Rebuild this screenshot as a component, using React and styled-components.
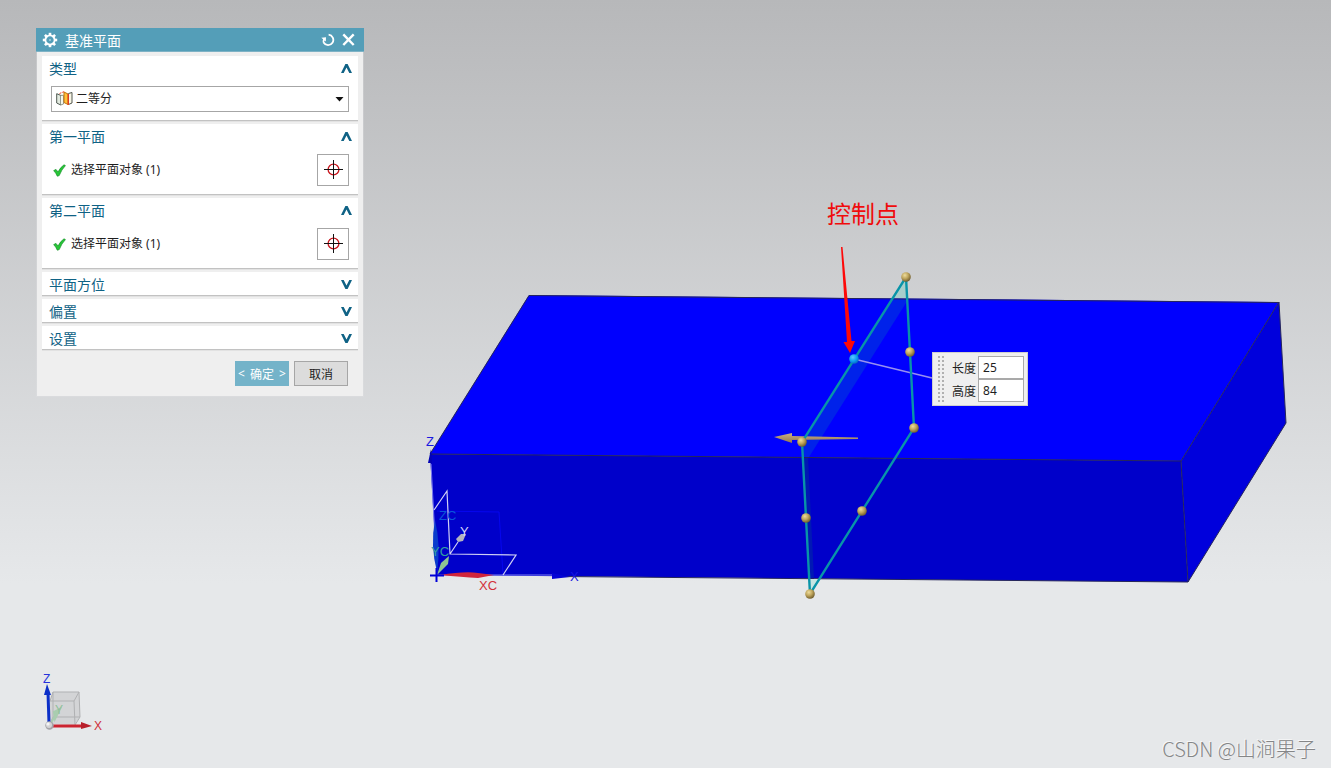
import React, { useState } from "react";
import styled, { createGlobalStyle, css } from "styled-components";

const UI_FONT = `"Noto Sans", "Noto Sans CJK SC", sans-serif`;

const GlobalStyle = createGlobalStyle`
  *, *::before, *::after { box-sizing: border-box; }
  body { margin: 0; font-family: ${UI_FONT}; font-size: 12px; color: #1e1e1e; }
  button, input, select { font: inherit; color: inherit; margin: 0; }
`;

const Viewport = styled.main`
  position: relative;
  min-height: 100vh;
  overflow: hidden;
  background: linear-gradient(#b7b8ba 0%, #e6e8ea 76%, #e6e8ea 100%);
`;

const Scene = styled.svg`
  position: absolute;
  inset: 0;
  width: 100%;
  height: 100%;
  font-family: "Liberation Sans", sans-serif;
`;

const Triad = styled.svg`
  position: absolute;
  left: 40px;
  bottom: 30px;
  width: 70px;
  height: 70px;
  font-family: "Liberation Sans", sans-serif;
`;

const Dialog = styled.section`
  position: absolute;
  left: 36px;
  top: 28px;
  width: 328px;
`;

const TitleBar = styled.header`
  display: flex;
  align-items: center;
  height: 24px;
  padding: 0 9px 0 6px;
  gap: 7px;
  background: #549eb8;
  color: #fff;
`;

const Title = styled.h1`
  flex: 1;
  margin: 0;
  padding-top: 2px;
  font-size: 14px;
  line-height: 24px;
  font-weight: 400;
`;

const TitleButton = styled.button`
  display: flex;
  padding: 0;
  border: 0;
  background: none;
`;

const DialogBody = styled.form`
  display: flex;
  flex-direction: column;
  gap: 3px;
  margin: 0 1px;
  padding: 4px 5px 10px;
  background: #efefef;
  box-shadow: 0 0 0 1px rgba(225, 226, 228, 0.3);
`;

const Group = styled.section`
  background: #fff;
  border-bottom: 1px solid #c2c2c2;
  box-shadow: 0 1px 0 #e2e2e2;
`;

const GroupHeading = styled.h2`
  margin: 0;
  font-size: 14px;
  font-weight: 400;
`;

const GroupToggle = styled.button`
  display: flex;
  align-items: center;
  justify-content: space-between;
  width: 100%;
  height: 23px;
  padding: 2px 6px 0 7px;
  border: 0;
  background: none;
  color: #0f6285;
  line-height: 22px;
  text-align: left;
`;

const GroupContent = styled.div`
  padding: 7px 9px 8px;
`;

const SelectBox = styled.label`
  position: relative;
  display: block;

  svg { position: absolute; pointer-events: none; }
  svg:first-child { left: 5px; top: 5px; }
  svg:last-child { right: 5px; top: 11px; }
`;

const TypeSelect = styled.select`
  display: block;
  width: 100%;
  height: 26px;
  padding: 0 24px 1px;
  border: 1px solid #a6a6a6;
  border-radius: 0;
  background: #fff;
  appearance: none;
`;

const PickRow = styled.div`
  display: flex;
  align-items: center;
  gap: 5px;
  padding-left: 2px;
`;

const PickLabel = styled.span`
  flex: 1;
  padding-bottom: 2px;
`;

const PickButton = styled.button`
  display: flex;
  align-items: center;
  justify-content: center;
  width: 32px;
  height: 32px;
  padding: 0;
  border: 1px solid #a6a6a6;
  background: #fff;
`;

const Actions = styled.footer`
  display: flex;
  justify-content: flex-end;
  gap: 5px;
  padding: 8px 10px 0 0;
`;

const ActionButton = styled.button`
  display: flex;
  align-items: center;
  justify-content: center;
  gap: 5px;
  width: 54px;
  height: 25px;
  padding: 0;
  border: 1px solid #a6a6a6;
  background: #dcdcdc;
  ${({ $primary }) => $primary && css`
    border-color: #74b3c9;
    background: #74b3c9;
    color: #fff;
  `}
`;

const Note = styled.p`
  position: absolute;
  left: 827px;
  top: 200px;
  margin: 0;
  font-size: 24px;
  line-height: 28px;
  color: #f00c0c;
`;

const SizePanel = styled.div`
  position: absolute;
  left: 932px;
  top: 352px;
  display: flex;
  padding: 3px;
  border: 1px solid #cfcfcf;
  background: #efefef;
`;

const Grip = styled.div`
  width: 8px;
  height: 46px;
  margin-right: 8px;
  background: conic-gradient(#b0b0b0 90deg, transparent 0) 0 0 / 4px 4px;
`;

const SizeFields = styled.div`
  display: flex;
  flex-direction: column;
`;

const SizeField = styled.label`
  display: flex;
  align-items: center;
  gap: 2px;
`;

const SizeInput = styled.input`
  width: 46px;
  height: 23px;
  padding: 0 4px;
  border: 1px solid #a9a9a9;
  border-radius: 0;
  background: #fff;
`;

const Watermark = styled.p`
  position: absolute;
  right: 15px;
  bottom: 6px;
  margin: 0;
  font-family: "Noto Sans CJK SC", sans-serif;
  font-size: 20px;
  line-height: 26px;
  font-weight: 300;
  color: #858687;
  text-shadow: -1px -1px 0 #f6f7f8;
`;

const TEETH = [0, 45, 90, 135, 180, 225, 270, 315];

function GearIcon() {
  return (
    <svg width="16" height="16" viewBox="-8 -8 16 16" aria-hidden="true">
      {TEETH.map((a) => (
        <rect key={a} x="-1.3" y="-7.2" width="2.6" height="3" fill="#fff" transform={`rotate(${a})`} />
      ))}
      <circle r="4.6" fill="none" stroke="#fff" strokeWidth="1.8" />
      <circle r="1" fill="#a9d0de" />
    </svg>
  );
}

function ResetIcon() {
  return (
    <svg width="14" height="14" viewBox="0 0 14 14" aria-hidden="true">
      <path d="M7.6 1.7a5.2 5.2 0 1 1-5 7.8" fill="none" stroke="#fff" strokeWidth="1.8" />
      <path d="M0.3 4.7 5 4.2 4.8 8.6 3.6 7.6Q3 8.6 3.4 9.9L1.8 9.8Q1.3 8 2.1 6.3Z" fill="#fff" />
    </svg>
  );
}

function CloseIcon() {
  return (
    <svg width="13" height="14" viewBox="0 0 13 14" aria-hidden="true">
      <path d="M1.3 1.4 11.7 12M11.7 1.4 1.3 12" stroke="#fff" strokeWidth="2.4" />
    </svg>
  );
}

function Chevron({ open }) {
  return (
    <svg width="11" height="9" viewBox="0 0 11 9" aria-hidden="true">
      <path
        d={open ? "M0 9 4.4 0H6.6L11 9H8.3L5.5 3.600 2.700 9Z" : "M0 0 4.4 9H6.6L11 0H8.3L5.5 5.4 2.7 0Z"}
        fill="#0f6285"
      />
    </svg>
  );
}

function BisectorIcon() {
  return (
    <svg width="17" height="16" viewBox="0 0 17 16" aria-hidden="true">
      <path d="M4.8 2.500H8V11H4.800Z" fill="#f5f8ee" />
      <path d="M.7 2.7 4.8 4.4V14L.7 12Z" fill="#e2eadf" stroke="#4e5850" />
      <path d="M4.8 4.4H7.500V13L4.800 14" fill="#f5f8ee" stroke="#7c8474" strokeWidth=".8" />
      <path d="M3.500 2.500 8 .7" stroke="#ed3b20" strokeDasharray="2 1" />
      <path d="M8 1 12 3V13.500L8 11.500Z" fill="#ffc23a" stroke="#c4700c" />
      <path d="M12.500 2.500 16 1.500V12L12.500 13.500Z" fill="#f8f6e6" stroke="#545950" />
      <path d="M12.300 3V14" stroke="#ed3b20" strokeWidth="1.2" />
    </svg>
  );
}

function CheckIcon() {
  return (
    <svg width="13" height="13" viewBox="0 0 13 13" aria-hidden="true">
      <path d="M.7 6.6 3 5.4 5 8Q7.6 3 11 .8L12.4 1.6Q8.5 5.6 6.2 11.6L4.3 12.2Q3 9 .7 6.6Z" fill="#27c637" stroke="#149126" strokeWidth=".7" />
    </svg>
  );
}

function TargetIcon() {
  return (
    <svg width="20" height="20" viewBox="0 0 20 20" aria-hidden="true">
      <circle cx="10.5" cy="9.5" r="5.4" fill="none" stroke="#c8171e" strokeWidth="1.3" />
      <path d="M1 9.5H20M10.5 0V19" stroke="#111" />
    </svg>
  );
}

function PlaneGroup({ title, open, onToggle, children }) {
  return (
    <Group>
      <GroupHeading>
        <GroupToggle type="button" aria-expanded={open} onClick={onToggle}>
          {title}
          <Chevron open={open} />
        </GroupToggle>
      </GroupHeading>
      {open && children && <GroupContent>{children}</GroupContent>}
    </Group>
  );
}

function ObjectPicker() {
  return (
    <PickRow>
      <CheckIcon />
      <PickLabel>选择平面对象 (1)</PickLabel>
      <PickButton type="button" aria-label="选择平面对象">
        <TargetIcon />
      </PickButton>
    </PickRow>
  );
}

const HANDLES = [
  [906, 277], [910, 352], [914, 428], [862, 511],
  [810, 594], [806, 518], [802, 442],
];

function ModelScene() {
  return (
    <Scene aria-label="基准平面">
      <defs>
        <radialGradient id="brass" cx=".38" cy=".32" r=".7">
          <stop offset="0" stopColor="#eddc9c" />
          <stop offset=".5" stopColor="#bfa55c" />
          <stop offset="1" stopColor="#6e5b2c" />
        </radialGradient>
        <radialGradient id="azure" cx=".38" cy=".32" r=".7">
          <stop offset="0" stopColor="#5cc8ff" />
          <stop offset=".6" stopColor="#0c9cf0" />
          <stop offset="1" stopColor="#0668c4" />
        </radialGradient>
        <linearGradient id="bronze" x1="0" y1="0" x2="0" y2="1">
          <stop offset="0" stopColor="#cbb086" />
          <stop offset="1" stopColor="#92764e" />
        </linearGradient>
      </defs>

      <polygon points="529,295 1279,302 1181,461 430,454" fill="#0000fe" />
      <polygon points="430,454 1181,461 1188,582 437,575" fill="#0000ca" />
      <polygon points="1181,461 1279,302 1286,423 1188,582" fill="#0000dc" />
      <polygon points="892,299 906,299 906,303 809,457 803,457 802,442" fill="#0022ea" />
      <polygon points="803,457 808,457 814,579 810,579" fill="#0018b4" />
      <g fill="none" stroke="#26265a">
        <path d="M430 454 529 295.5 1279 302.5" />
        <path d="M430 454 1181 461 1279 302" />
        <path d="M1181 461 1188 582 1286 423 1279 302" />
        <path d="M560 576.5 1188 582" />
      </g>
      <polygon points="906,277 892,298 907,298" fill="#a8cfcb" />
      <polygon points="810,594 809,579 820,579" fill="#c6e4e1" />

      <g fill="none">
        <path d="M437 511 499 512 503 574" stroke="#0606f0" />
        <path d="M431 464 437 575H552" stroke="#7c7cf0" />
        <path d="M434 510 447 491 450 554 516 555 503 575M450 554 458 542" stroke="#d0d0f4" strokeWidth="1.2" />
      </g>
      <polygon points="431,449 428,463 432,463" fill="#0202b4" />
      <path d="M435 520Q430 545 437 572 441 545 435 520Z" fill="#0a3ccc" />
      <polygon points="456,539 461,534 466,534 463,541 458,542" fill="#b4b4c0" />
      <path d="M437 575 441 563 449 556 448 564Z" fill="#8fc493" />
      <path d="M440 575Q465 571 478 573L494 575 478 578Q462 577 440 575Z" fill="#d0253c" />
      <polygon points="552,573 570,577 552,579" fill="#0404d6" />
      <path d="M430 575.5H444M436.5 568V582" stroke="#0000d8" strokeWidth="2" />
      <g fontSize="13">
        <text x="426" y="446" fill="#1a1ae0">Z</text>
        <text x="439" y="520" fill="#0a56dc">ZC</text>
        <text x="431" y="556" fill="#31a09c">YC</text>
        <text x="460" y="536" fill="#d4d4fa">Y</text>
        <text x="479" y="590" fill="#d2303a">XC</text>
        <text x="570" y="581" fill="#1616e0">X</text>
      </g>

      <path d="M854 359 932 378" stroke="#9890f0" strokeWidth="1.4" />
      <path d="M774 437 792 433V436L858 437.5V439L792 440V443Z" fill="url(#bronze)" />
      <polygon points="906,277 914,428 810,594 802,442" fill="none" stroke="#0894a8" strokeWidth="2.4" />
      {HANDLES.map(([x, y]) => (
        <circle key={`${x}-${y}`} cx={x} cy={y} r="4.8" fill="url(#brass)" />
      ))}
      <circle cx="854" cy="359" r="4.8" fill="url(#azure)" />
      <path d="M841 247H842.5L851.5 341H855L850 353 843.5 342H847Z" fill="#fe0808" />
    </Scene>
  );
}

function AxisTriad() {
  return (
    <Triad viewBox="40 668 70 70" aria-hidden="true">
      <polygon points="53,692 79,692 80,717 74,725 50,724 50,701" fill="#d3d4d6" />
      <path
        d="M50 701 53 692H79L80 717 75 725M50 701H74L75 725M74 701 79 692M53 692V717H80M53 717 50 724"
        fill="none"
        stroke="#b0b1b3"
      />
      <path d="M51 723 56 714M54 712 60 709 55 719Z" stroke="#a9cdb0" fill="#a9cdb0" strokeWidth="2" />
      <path d="M49 723 48 693" stroke="#0b2fc8" strokeWidth="3" />
      <polygon points="47,684 44,695 51,695" fill="#0b2fc8" />
      <path d="M51 726H83" stroke="#cc2430" strokeWidth="3" />
      <polygon points="92,726 81,722 81,729" fill="#b81f2b" />
      <circle cx="49.5" cy="725.5" r="4.2" fill="#a4a4a8" />
      <circle cx="49" cy="725" r="3" fill="#d4d4d6" />
      <circle cx="48" cy="724" r="1.6" fill="#f4f4f4" />
      <text x="43" y="683" fontSize="12" fill="#2632dc">Z</text>
      <text x="55" y="714" fontSize="12" fill="#8fc09a">Y</text>
      <text x="94" y="730" fontSize="12" fill="#d0303a">X</text>
    </Triad>
  );
}

export default function App() {
  const [open, setOpen] = useState({ type: true, first: true, second: true });
  const bind = (key) => ({
    open: Boolean(open[key]),
    onToggle: () => setOpen((prev) => ({ ...prev, [key]: !prev[key] })),
  });

  return (
    <>
      <GlobalStyle />
      <Viewport>
        <ModelScene />
        <AxisTriad />

        <Note>控制点</Note>

        <SizePanel>
          <Grip />
          <SizeFields>
            <SizeField>
              长度
              <SizeInput defaultValue="25" />
            </SizeField>
            <SizeField>
              高度
              <SizeInput defaultValue="84" />
            </SizeField>
          </SizeFields>
        </SizePanel>

        <Dialog>
          <TitleBar>
            <GearIcon />
            <Title>基准平面</Title>
            <TitleButton type="button" aria-label="重置"><ResetIcon /></TitleButton>
            <TitleButton type="button" aria-label="关闭"><CloseIcon /></TitleButton>
          </TitleBar>
          <DialogBody onSubmit={(e) => e.preventDefault()}>
            <PlaneGroup title="类型" {...bind("type")}>
              <SelectBox>
                <BisectorIcon />
                <TypeSelect aria-label="类型">
                  <option>二等分</option>
                </TypeSelect>
                <svg width="9" height="5" viewBox="0 0 9 5" aria-hidden="true">
                  <path d="M.5 0H8.5L4.5 4.5Z" fill="#111" />
                </svg>
              </SelectBox>
            </PlaneGroup>
            <PlaneGroup title="第一平面" {...bind("first")}><ObjectPicker /></PlaneGroup>
            <PlaneGroup title="第二平面" {...bind("second")}><ObjectPicker /></PlaneGroup>
            <PlaneGroup title="平面方位" {...bind("orientation")} />
            <PlaneGroup title="偏置" {...bind("offset")} />
            <PlaneGroup title="设置" {...bind("settings")} />
            <Actions>
              <ActionButton $primary>
                <span>&lt;</span>
                <span>确定</span>
                <span>&gt;</span>
              </ActionButton>
              <ActionButton type="button">取消</ActionButton>
            </Actions>
          </DialogBody>
        </Dialog>

        <Watermark>CSDN @山涧果子</Watermark>
      </Viewport>
    </>
  );
}
